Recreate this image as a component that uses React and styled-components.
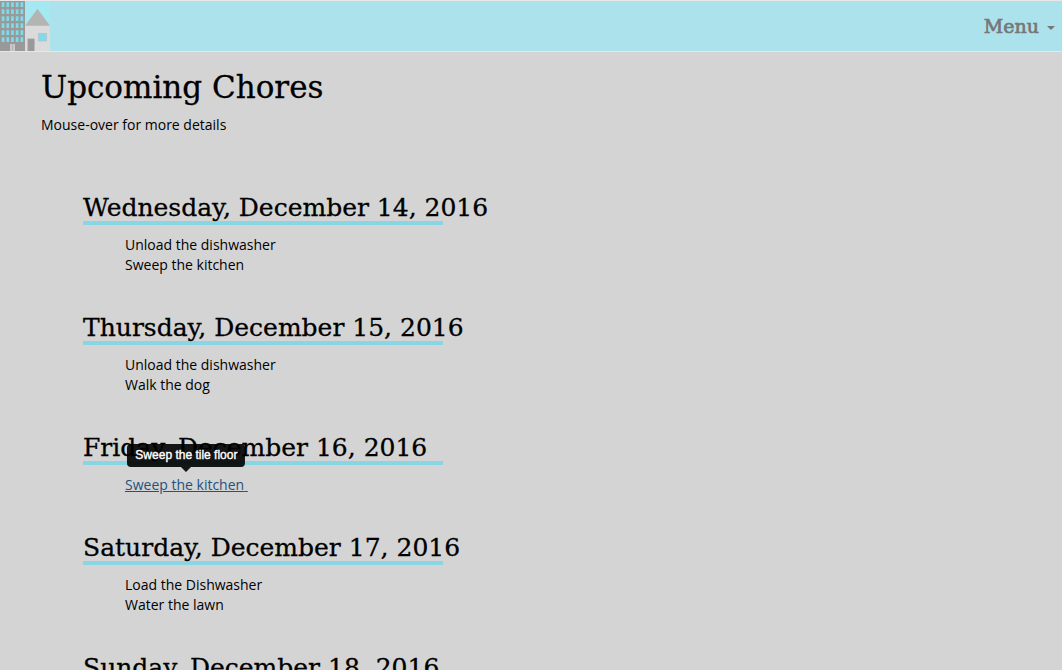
import React from "react";
import styled, { createGlobalStyle } from "styled-components";

const GlobalStyle = createGlobalStyle`
  *, *::before, *::after { box-sizing: border-box; }
  body {
    margin: 0;
    background: #d4d4d4;
    color: #000;
    font: 14px/20px "Open Sans", sans-serif;
  }
`;

const display = `"DejaVu Serif", serif`;

const Page = styled.div`
  height: 100vh;
  overflow: hidden;
`;

const Navbar = styled.nav`
  display: flex;
  justify-content: space-between;
  align-items: center;
  background: #ace2eb;
  border-top: 1px solid #e7e7e7;
  border-bottom: 1px solid #e7e7e7;
`;

const Brand = styled.a`
  display: block;
  height: 50px;
  svg { display: block; }
`;

const MenuButton = styled.button`
  display: flex;
  align-items: center;
  gap: 8px;
  padding: 0 7px;
  border: 0;
  background: none;
  color: #777;
  font: 400 19px/48px ${display};
  -webkit-text-stroke: 0.7px currentColor;
`;

const Caret = styled.span`
  margin-top: 3px;
  border-top: 4px solid currentColor;
  border-left: 4px solid transparent;
  border-right: 4px solid transparent;
`;

const Main = styled.main`
  padding: 15px 41px;
`;

const Title = styled.h1`
  margin: 0 0 8px;
  font: 400 31px/40px ${display};
  -webkit-text-stroke: 0.3px currentColor;
`;

const Intro = styled.p`
  margin: 0 0 60px;
`;

const Day = styled.section`
  margin: 0 0 40px 42px;
`;

const DayTitle = styled.h2`
  width: 360px;
  margin: 0 0 10px;
  border-bottom: 4px solid #88d6e4;
  font: 400 25px/26px ${display};
  -webkit-text-stroke: 0.3px currentColor;
  white-space: nowrap;
`;

const ChoreList = styled.ul`
  margin: 0;
  padding: 0 0 0 42px;
  list-style: none;
`;

const Chore = styled.li`
  position: relative;
  width: max-content;
`;

const ChoreLink = styled.a`
  color: ${(p) => (p.$active ? "#23527c" : "inherit")};
  text-decoration: ${(p) => (p.$active ? "underline" : "none")};
  white-space: pre;
`;

const Tooltip = styled.span`
  position: absolute;
  bottom: 100%;
  left: 50%;
  transform: translateX(-50%);
  margin-bottom: 8px;
  padding: 3px 8px;
  border-radius: 4px;
  background: rgba(0, 0, 0, 0.9);
  color: #fff;
  font: 12px/17px "Liberation Sans", Arial, sans-serif;
  -webkit-text-stroke: 0.4px #fff;
  white-space: nowrap;

  &::after {
    content: "";
    position: absolute;
    top: 100%;
    left: 50%;
    margin-left: -5px;
    border: 5px solid transparent;
    border-top-color: rgba(0, 0, 0, 0.9);
    border-bottom: 0;
  }
`;

const days = [
  { date: "Wednesday, December 14, 2016", chores: [{ name: "Unload the dishwasher" }, { name: "Sweep the kitchen" }] },
  { date: "Thursday, December 15, 2016", chores: [{ name: "Unload the dishwasher" }, { name: "Walk the dog" }] },
  { date: "Friday, December 16, 2016", chores: [{ name: "Sweep the kitchen", tip: "Sweep the tile floor" }] },
  { date: "Saturday, December 17, 2016", chores: [{ name: "Load the Dishwasher" }, { name: "Water the lawn" }] },
  { date: "Sunday, December 18, 2016", chores: [] },
];

function Logo() {
  const windows = [];
  for (let row = 0; row < 6; row++) {
    for (let col = 0; col < 5; col++) {
      windows.push(
        <rect key={`${row}-${col}`} x={1.7 + col * 4.7} y={1.3 + row * 7} width="2.7" height="4.7" fill="#7fdbe9" />
      );
    }
  }
  return (
    <svg width="50" height="50" viewBox="0 0 50 50" aria-hidden="true">
      <rect width="50" height="50" fill="#a4e9f2" />
      <rect width="25" height="50" fill="#999" />
      {windows}
      <rect x="10" y="43" width="5" height="7" fill="#c8c8c8" />
      <path d="M12.5 43v7" stroke="#aaa" strokeWidth=".6" />
      <rect x="25" y="24.5" width="25" height="25.5" fill="#dbdbdb" />
      <path d="M25 24.7 37.5 7.7 50 24.7z" fill="#b4b4b4" />
      <rect x="38.3" y="32.3" width="8.4" height="7.7" fill="#7fdbe9" stroke="#b8c4c6" strokeWidth=".7" />
      <path d="M27.7 50V37.8h6.7V50" fill="#999" stroke="#b4b4b4" strokeWidth=".7" />
    </svg>
  );
}

export default function App() {
  return (
    <Page>
      <GlobalStyle />
      <Navbar>
        <Brand href="#" aria-label="Home"><Logo /></Brand>
        <MenuButton type="button" aria-haspopup="true">Menu<Caret /></MenuButton>
      </Navbar>
      <Main>
        <Title>Upcoming Chores</Title>
        <Intro>Mouse-over for more details</Intro>
        {days.map((day) => (
          <Day key={day.date}>
            <DayTitle>{day.date}</DayTitle>
            <ChoreList>
              {day.chores.map((chore) => (
                <Chore key={chore.name}>
                  <ChoreLink href="#" $active={Boolean(chore.tip)}>{chore.name}{chore.tip && " "}</ChoreLink>
                  {chore.tip && <Tooltip role="tooltip">{chore.tip}</Tooltip>}
                </Chore>
              ))}
            </ChoreList>
          </Day>
        ))}
      </Main>
    </Page>
  );
}
